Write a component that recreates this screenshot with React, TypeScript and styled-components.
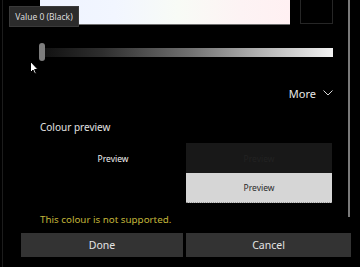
import styled, { createGlobalStyle } from 'styled-components'

const Global = createGlobalStyle`
	html, body {
		margin: 0;
		padding: 0;
		background: #000;
	}
	body {
		font-family: "Noto Sans", "Open Sans", sans-serif;
		color: #e6e6e6;
	}
`

const Frame = styled.div`
	position: relative;
	width: 360px;
	height: 267px;
	overflow: hidden;
	background: #000;
	display: flex;
	flex-direction: column;
`
const EdgeLine = styled.div`
	position: absolute;
	left: 2px;
	top: 0;
	width: 1px;
	height: 267px;
	background: #1c1c1c;
`
const Scrollbar = styled.div`
	position: absolute;
	left: 348px;
	top: 0;
	width: 2px;
	height: 217px;
	background: #7a7a7a;
`
const Content = styled.div`
	display: flex;
	flex-direction: column;
	padding: 0 27px 0 40px;
`
const PickerRow = styled.div`
	display: flex;
	gap: 10px;
	height: 25px;
`
const Spectrum = styled.div`
	width: 250px;
	height: 24px;
	border-bottom: 1px solid #6e6e6e;
	background: linear-gradient(90deg, #eef3ff 0%, #f2f6ff 30%, #f8fbf6 55%, #fdf3f4 80%, #fff0f2 100%);
`
const Swatch = styled.div`
	width: 31px;
	height: 23px;
	border: 1px solid #262626;
	border-top: none;
	background: #000;
`
const SliderRow = styled.div`
	display: flex;
	align-items: center;
	margin: 18px 0 0 -1px;
	height: 18px;
`
const Thumb = styled.div`
	width: 6px;
	height: 18px;
	border-radius: 3px;
	background: #7d7d7d;
`
const Track = styled.div`
	flex: 1;
	height: 9px;
	background: linear-gradient(90deg, #121212 0%, #2e2e2e 20%, #707070 50%, #b4b4b4 75%, #f2f2f2 100%);
`
const MoreRow = styled.div`
	display: flex;
	justify-content: flex-end;
	align-items: center;
	gap: 7px;
	margin-top: 24px;
	height: 16px;
	font-size: 11px;
	color: #e8e8e8;
`
const SectionTitle = styled.div`
	margin-top: 18px;
	height: 16px;
	line-height: 16px;
	font-size: 10px;
	color: #e2e2e2;
`
const PreviewGrid = styled.div`
	display: grid;
	grid-template-columns: 146px 146px;
	grid-template-rows: 30px 30px;
	margin-top: 8px;
`
const PreviewCell = styled.div<{ $bg: string; $fg: string }>`
	display: flex;
	align-items: center;
	justify-content: center;
	font-size: 8.5px;
	background: ${p => p.$bg};
	color: ${p => p.$fg};
`
const LightCell = styled(PreviewCell)`
	border-bottom: 1px dotted #9a9a9a;
	box-sizing: border-box;
`
const Warning = styled.div`
	margin-top: 10px;
	height: 14px;
	line-height: 14px;
	font-size: 9.8px;
	color: #c2b53a;
`
const ButtonRow = styled.div`
	display: flex;
	gap: 3px;
	padding: 0 9px 0 21px;
	margin-top: 6px;
`
const Button = styled.div<{ $w: number }>`
	width: ${p => p.$w}px;
	height: 24px;
	display: flex;
	align-items: center;
	justify-content: center;
	background: #333333;
	font-size: 10.5px;
	color: #e4e4e4;
`
const Tooltip = styled.div`
	position: absolute;
	left: 9px;
	top: 6px;
	width: 70px;
	height: 21px;
	display: flex;
	align-items: center;
	justify-content: center;
	background: #2b2b2b;
	border: 1px solid #3a3a3a;
	box-sizing: border-box;
	font-size: 8.5px;
	color: #dcdcdc;
	white-space: nowrap;
`
const Cursor = styled.svg`
	position: absolute;
	left: 30px;
	top: 61px;
`

export default function App() {
	return <>
		<Global />
		<Frame>
			<EdgeLine />
			<Content>
				<PickerRow>
					<Spectrum />
					<Swatch />
				</PickerRow>
				<SliderRow>
					<Thumb />
					<Track />
				</SliderRow>
				<MoreRow>
					<span>More</span>
					<svg width="10" height="6" viewBox="0 0 10 6">
						<path d="M0.5 0.5 L5 5 L9.5 0.5" fill="none" stroke="#d8d8d8" strokeWidth="1" />
					</svg>
				</MoreRow>
				<SectionTitle>Colour preview</SectionTitle>
				<PreviewGrid>
					<PreviewCell $bg="#000" $fg="#f2f2f2">Preview</PreviewCell>
					<PreviewCell $bg="#181818" $fg="#222">Preview</PreviewCell>
					<div />
					<LightCell $bg="#d6d6d6" $fg="#2a2a2a">Preview</LightCell>
				</PreviewGrid>
				<Warning>This colour is not supported.</Warning>
			</Content>
			<ButtonRow>
				<Button $w={162}>Done</Button>
				<Button $w={165}>Cancel</Button>
			</ButtonRow>
			<Scrollbar />
			<Tooltip>Value 0 (Black)</Tooltip>
			<Cursor width="9" height="14" viewBox="0 0 9 14">
				<path d="M0.5 0.5 L0.5 11.5 L3 9 L4.8 13 L6.3 12.3 L4.6 8.5 L8 8.5 Z" fill="#fff" stroke="#000" strokeWidth="1" />
			</Cursor>
		</Frame>
	</>
}
